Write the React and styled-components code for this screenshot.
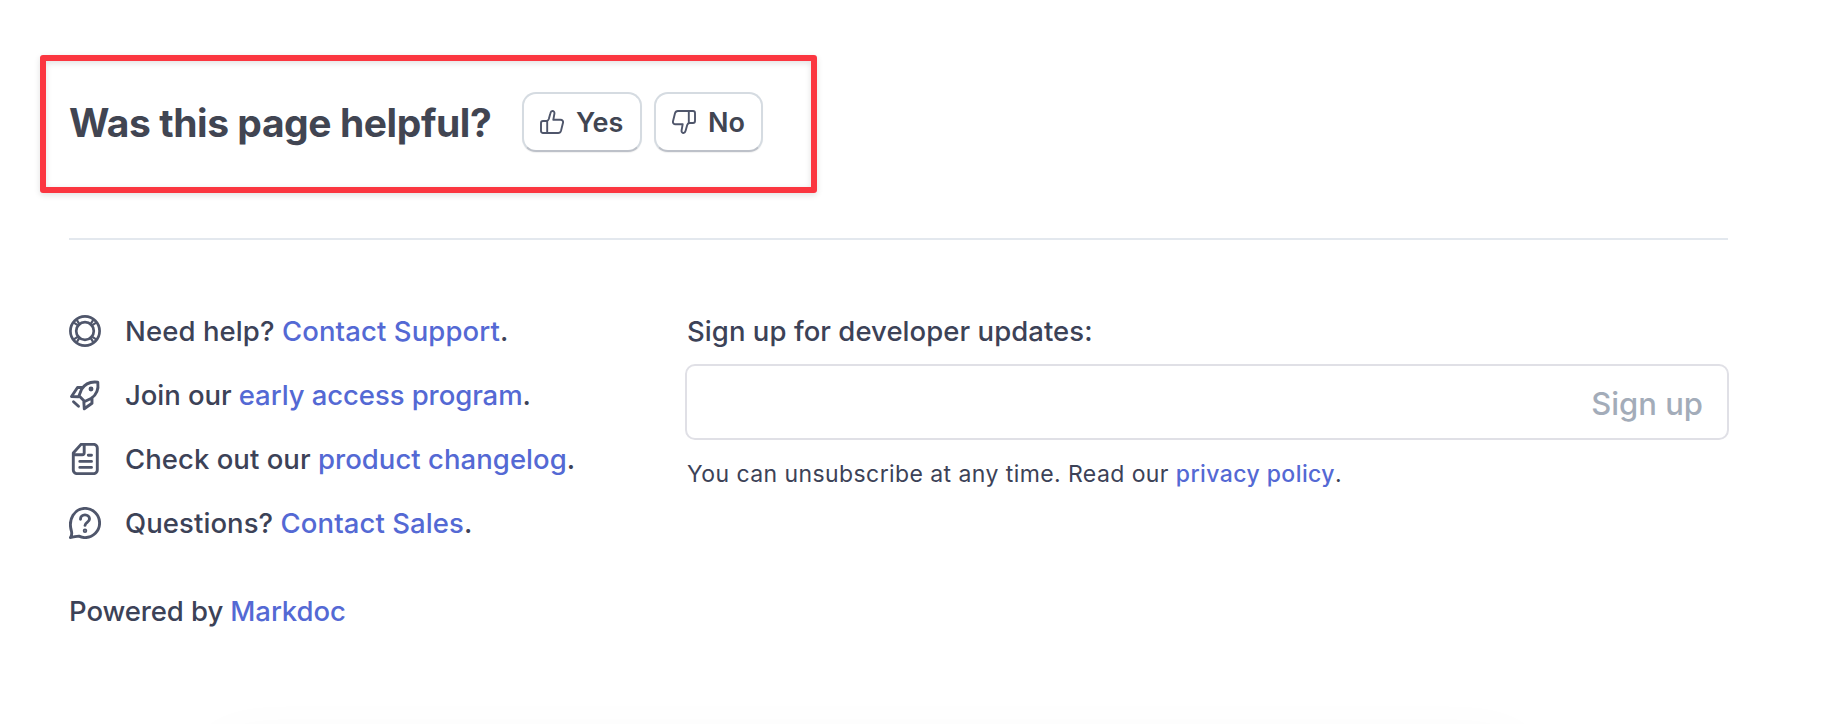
import React from "react";
import styled, { createGlobalStyle } from "styled-components";

const Global = createGlobalStyle`
  * { box-sizing: border-box; }
  html, body, #root { height: 100%; }
  body { margin: 0; background: #fff; overflow: hidden; }
`;

const Page = styled.main`
  position: relative;
  height: 724px;
  overflow: hidden;
  padding: 55px 116px 0 40px;
  background: #fff;
  color: #3c4257;
  font-family: Inter, "Liberation Sans", sans-serif;
  -webkit-font-smoothing: antialiased;
`;

const Feedback = styled.section`
  display: flex;
  align-items: flex-start;
  width: 776.5px;
  height: 138px;
  padding: 31px 0 0 23px;
  border: 6px solid #fb3640;
  border-radius: 3px;
  box-shadow: 0 2px 6px rgba(0, 0, 0, 0.12), inset 0 2px 6px rgba(0, 0, 0, 0.12);
`;

const Title = styled.h2`
  width: 453px;
  margin: 0;
  padding-top: 1px;
  font-size: 39px;
  font-weight: 700;
  line-height: 60px;
  letter-spacing: -0.43px;
  color: #414552;
  white-space: nowrap;
`;

const Vote = styled.button`
  display: flex;
  align-items: center;
  width: ${(p) => p.$width};
  height: 60px;
  margin: 0 12px 0 0;
  padding: 0 0 0 16px;
  gap: 12px;
  border: 2px solid #d5dbe1;
  border-bottom-color: #bdc1c9;
  border-radius: 14px;
  background: #fff;
  color: #414552;
  font: 600 27px/56px Inter, sans-serif;
  box-shadow: 0 1px 1px rgba(0, 0, 0, 0.06);
`;

const VoteLabel = styled.span`
  padding-top: 1px;
`;

const Footer = styled.footer`
  display: flex;
  margin: 45px 0 0 29px;
  padding-top: 59px;
  border-top: 2px solid #e3e8ee;
`;

const Links = styled.div`
  width: 616px;
`;

const Row = styled.div`
  display: flex;
  align-items: center;
  height: 64px;
  gap: 24px;
  font-size: 27.5px;
  font-weight: 500;
  line-height: 64px;
  white-space: nowrap;
`;

const Powered = styled(Row)`
  margin-top: 24px;
`;

const Text = styled.span`
  letter-spacing: ${(p) => p.$track};
`;

const Anchor = styled.a`
  color: #5469d4;
  font-weight: ${(p) => p.$weight || "inherit"};
  text-decoration: none;
`;

const Signup = styled.form`
  flex: 1;
  margin-right: -1px;
`;

const Label = styled.label`
  display: block;
  height: 65px;
  padding-left: 2px;
  font-size: 27.5px;
  font-weight: 500;
  line-height: 64px;
  letter-spacing: 0.05px;
  white-space: nowrap;
`;

const Field = styled.div`
  display: flex;
  align-items: center;
  justify-content: flex-end;
  height: 76px;
  padding: 2px 24px 0 0;
  border: 2px solid #e0e0e6;
  border-radius: 10px;
  color: #a3acb9;
  font-size: 31px;
  font-weight: 500;
`;

const Note = styled.p`
  margin: 14px 0 0;
  padding-left: 2px;
  font-size: 23px;
  line-height: 40px;
  letter-spacing: 0.42px;
  white-space: nowrap;
`;

const Glow = styled.div`
  position: absolute;
  left: 215px;
  top: 744px;
  width: 1305px;
  height: 60px;
  border-radius: 20px;
  box-shadow: 0 0 60px rgba(0, 40, 30, 0.04);
`;

const Icon = styled.svg`
  flex: none;
  width: ${(p) => p.$size}px;
  height: ${(p) => p.$size}px;
  fill: none;
  stroke: #4f566b;
  stroke-width: ${(p) => p.$stroke};
  stroke-linecap: round;
  stroke-linejoin: round;
`;

const ThumbUp = () => (
  <Icon viewBox="0 0 24 24" $size={24} $stroke={1.9}>
    <path d="M1 13a2 2 0 0 1 2-2h3.600c1.200-.2 1.800-.8 2.200-2l1.600-5.800C10.800 1.600 11.400 1 12.400 1c1.400 0 2.300 1.200 2 2.700L13.300 9.800h7.200c1.800 0 2.900 1.400 2.500 3l-2 8a3 3 0 0 1-2.900 2.200H3a2 2 0 0 1-2-2zM7.200 11v12" />
  </Icon>
);

const ThumbDown = () => (
  <Icon viewBox="0 0 24 24" $size={24} $stroke={1.9}>
    <path d="M23 11a2 2 0 0 1-2 2h-3.600c-1.200.2-1.800.8-2.200 2l-1.600 5.800c-.4 1.600-1 2.200-2 2.200-1.400 0-2.300-1.200-2-2.700l1.100-6.100H3.500c-1.800 0-2.900-1.400-2.500-3l2-8A3 3 0 0 1 5.900 1H21a2 2 0 0 1 2 2zM16.800 13V1" />
  </Icon>
);

const Lifebuoy = () => (
  <Icon viewBox="0 0 32 32" $size={32} $stroke={2.7}>
    <circle cx="16" cy="16" r="14.600" />
    <circle cx="16" cy="16" r="8.800" />
    <g strokeWidth="2.2">
      <path d="M5.600 8.200l3.700 2.400M8.200 5.600l2.400 3.700M26.400 8.200l-3.700 2.400M23.800 5.600l-2.400 3.700M5.600 23.800l3.700-2.400M8.200 26.400l2.400-3.700M26.400 23.800l-3.700-2.400M23.800 26.400l-2.400-3.700" />
    </g>
  </Icon>
);

const Rocket = () => (
  <Icon viewBox="0 0 32 32" $size={32} $stroke={2.9}>
    <path d="M28.800 3.200C22 2.300 15.800 5 12.600 10.300L10 16.800l5.700 5.700 6.300-3c5.300-3.500 7.700-9.800 6.800-16.300zM13.500 8.500H8.500L2.500 17.500l7 .2M23 19v5.300l-7.700 5.500L14.800 22.500M4.500 22.700l5 4.600" />
    <circle cx="22" cy="10" r="1" fill="#4f566b" />
  </Icon>
);

const Document = () => (
  <Icon viewBox="0 0 32 32" $size={32} $stroke={2.9}>
    <path d="M12 1.400h12.800a3.500 3.500 0 0 1 3.500 3.500v22.200a3.500 3.500 0 0 1-3.500 3.500H7.800a3.500 3.500 0 0 1-3.500-3.500V10zM15.200 1.500v8.300a2 2 0 0 1-2 2H4.500M19.300 12.200h3.200M10.800 18.400h11.700M10.800 24.400h11.700" />
  </Icon>
);

const Question = () => (
  <Icon viewBox="0 0 32 32" $size={32} $stroke={2.9}>
    <path d="M1.400 30.500c1.500-2 1.700-3.800 1-6.500C-1.200 12 5.700 1.400 16 1.400c8.200 0 14.600 6.500 14.600 14.600S24.200 30.600 16 30.600c-2.200 0-4-.5-6-1.500-2.500-.2-5 1.200-8.600 1.400zM11.500 12.200c0-2.500 2-4.300 4.500-4.300s4.500 1.700 4.500 4.100c0 3.200-4.500 3.400-4.500 6.400" />
    <circle cx="16" cy="23.700" r=".8" fill="#4f566b" />
  </Icon>
);

const items = [
  { icon: Lifebuoy, lead: "Need help? ", link: "Contact Support", track: "0.1px" },
  { icon: Rocket, lead: "Join our ", link: "early access program", track: "-0.07px" },
  { icon: Document, lead: "Check out our ", link: "product changelog", track: "0.04px" },
  { icon: Question, lead: "Questions? ", link: "Contact Sales", track: "0.08px" },
];

export default function App() {
  return (
    <>
      <Global />
      <Page>
        <Feedback>
          <Title>Was this page helpful?</Title>
          <Vote type="button" $width="120px"><ThumbUp /><VoteLabel>Yes</VoteLabel></Vote>
          <Vote type="button" $width="109px"><ThumbDown /><VoteLabel>No</VoteLabel></Vote>
        </Feedback>
        <Footer>
          <Links>
            {items.map(({ icon: Glyph, lead, link, track }) => (
              <Row key={link}>
                <Glyph />
                <Text $track={track}>{lead}<Anchor>{link}</Anchor>.</Text>
              </Row>
            ))}
            <Powered><Text $track="-0.09px">Powered by <Anchor>Markdoc</Anchor></Text></Powered>
          </Links>
          <Signup>
            <Label>Sign up for developer updates:</Label>
            <Field>Sign up</Field>
            <Note>You can unsubscribe at any time. Read our <Anchor $weight={500}>privacy policy</Anchor>.</Note>
          </Signup>
        </Footer>
        <Glow />
      </Page>
    </>
  );
}
